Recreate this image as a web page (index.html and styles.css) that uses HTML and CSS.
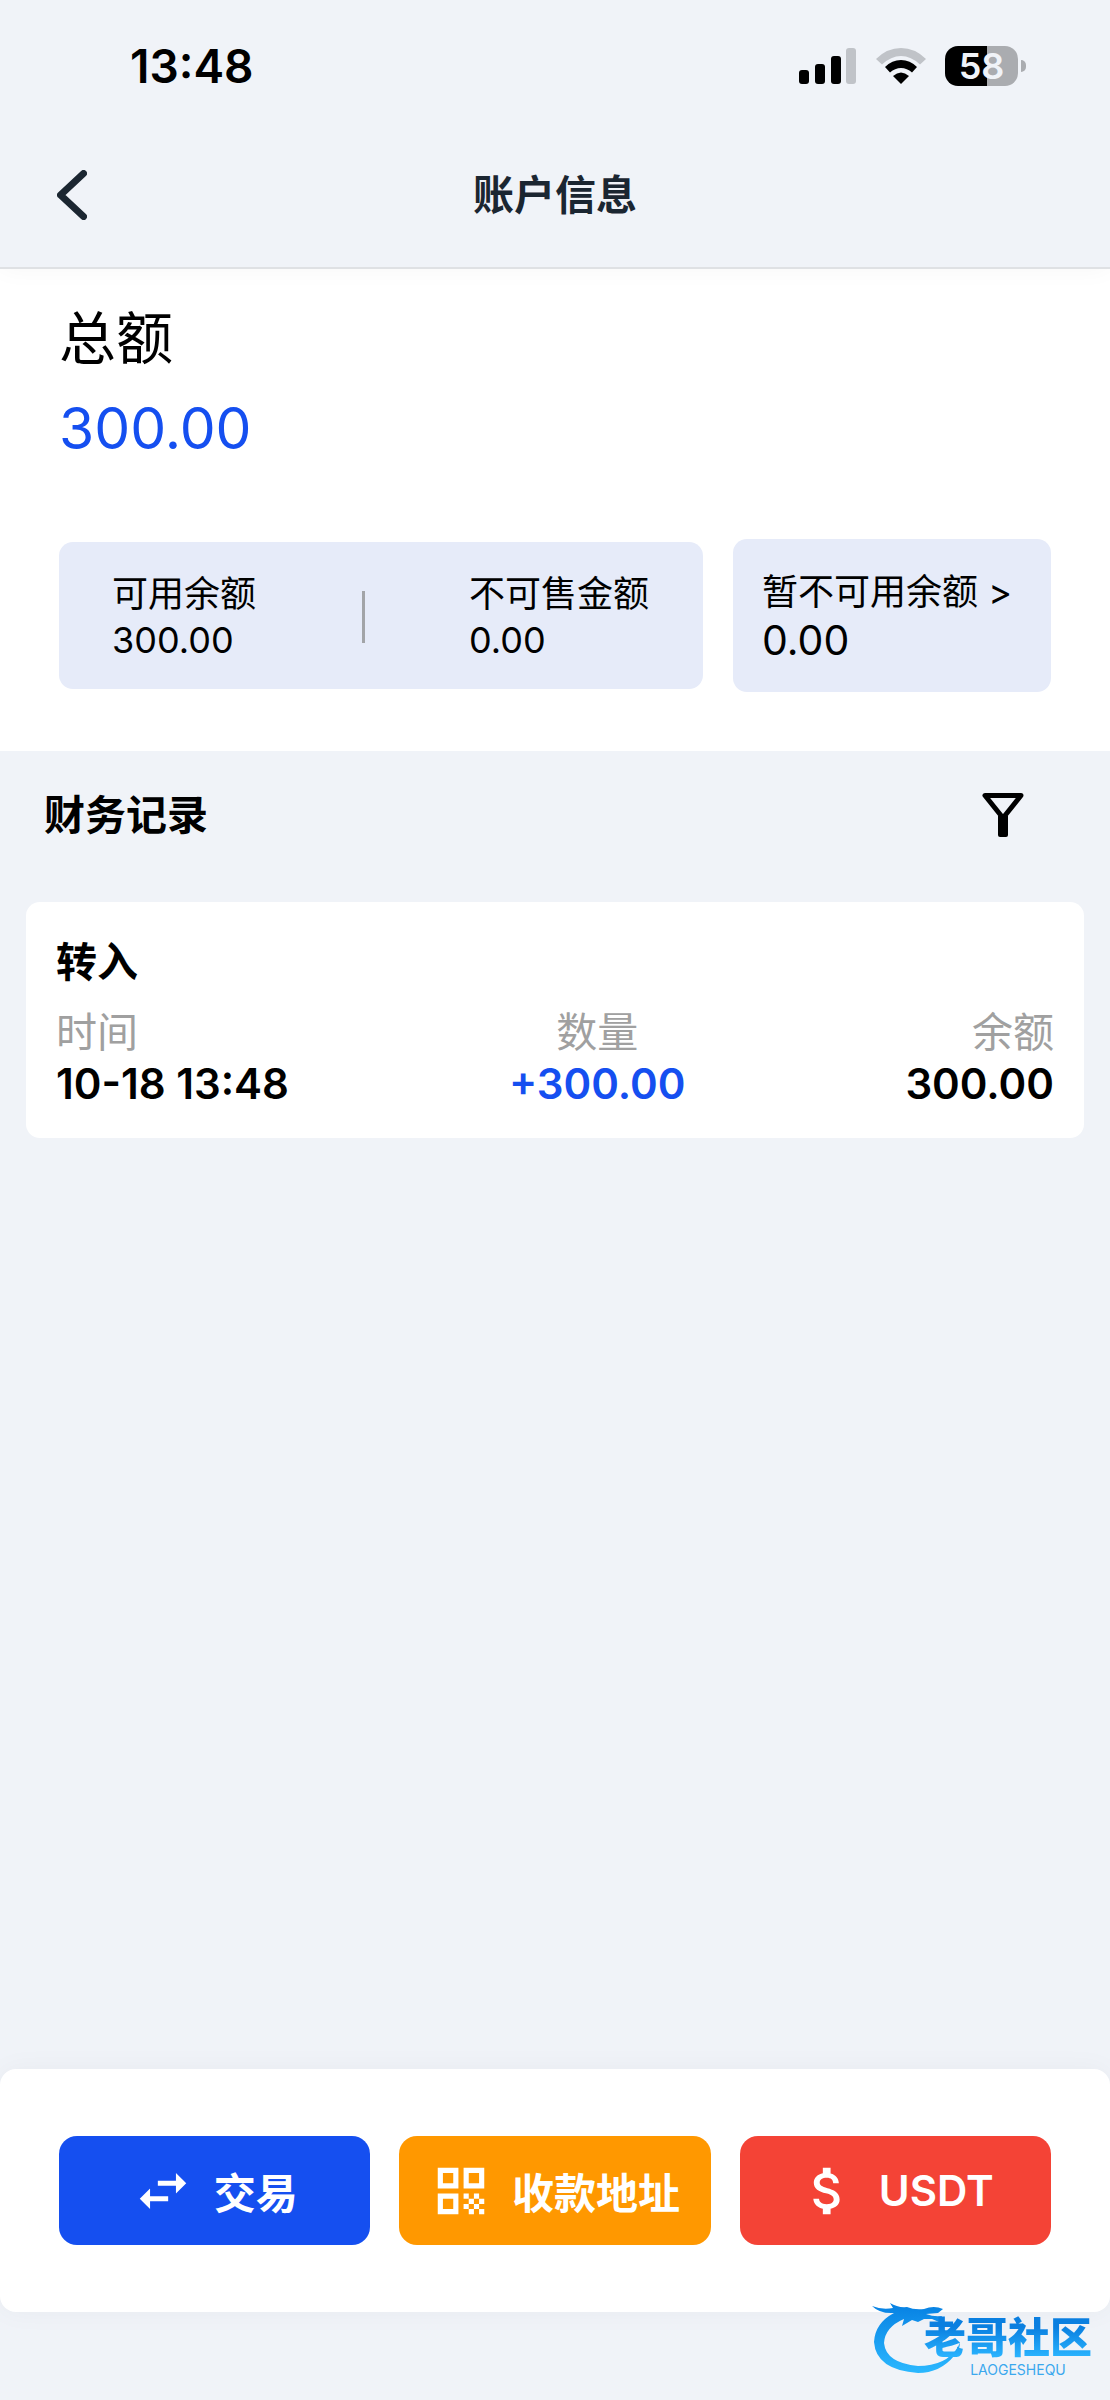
FILE: index.html
```html
<!DOCTYPE html>
<html lang="zh-CN">
<head>
<meta charset="utf-8">
<meta name="viewport" content="width=device-width, initial-scale=1">
<title>账户信息</title>
<link rel="stylesheet" href="styles.css">
</head>
<body>
<div class="app">
  <header class="top">
    <div class="status">
      <time class="clock">13:48</time>
      <div class="indicators">
        <svg class="signal" viewBox="0 0 58 36" aria-label="信号">
          <rect x="0" y="22" width="10" height="14" rx="3"/>
          <rect x="16" y="16" width="10" height="20" rx="3"/>
          <rect x="32" y="8" width="10" height="28" rx="3"/>
          <rect class="dim" x="47" y="0" width="10" height="36" rx="3"/>
        </svg>
        <svg class="wifi" viewBox="0 0 50 36" aria-label="无线网络">
          <path class="dim" d="M0 11Q11 0 25 0T50 11L44 16.500Q35 8 25 8T6 16.500Z"/>
          <path d="M9 19Q16 12 25 12T41 19L36 24.500Q31 20 25 20T14 24.500Z"/>
          <path d="M17 28Q21 24.500 25 24.500T33 28L25 36Z"/>
        </svg>
        <div class="battery"><span class="level">58</span></div>
      </div>
    </div>
    <nav class="nav">
      <button class="back" type="button" aria-label="返回">
        <svg viewBox="0 0 30 50"><path d="M26.500 3.500 3.500 25l23 21.500"/></svg>
      </button>
      <h1 class="title">账户信息</h1>
    </nav>
  </header>

  <section class="summary">
    <p class="total-label">总额</p>
    <p class="total">300.00</p>
    <div class="balances">
      <div class="panel split">
        <div class="balance"><span>可用余额</span><span>300.00</span></div>
        <div class="balance second"><span>不可售金额</span><span>0.00</span></div>
      </div>
      <a class="panel pending" href="#pending"><span>暂不可用余额 &gt;</span><span class="amount">0.00</span></a>
    </div>
  </section>

  <main class="records">
    <div class="records-head">
      <h2 class="heading">财务记录</h2>
      <button class="filter" type="button" aria-label="筛选">
        <svg viewBox="0 0 42 44"><path class="cone" d="M3 2.500h36L21 25Z"/><path class="stem" d="M16 23h10v19a2 2 0 0 1-2 2h-6a2 2 0 0 1-2-2Z"/></svg>
      </button>
    </div>
    <article class="card">
      <h3 class="heading">转入</h3>
      <dl class="fields">
        <div><dt>时间</dt><dd>10-18 13:48</dd></div>
        <div class="center"><dt>数量</dt><dd class="plus">+300.00</dd></div>
        <div class="end"><dt>余额</dt><dd>300.00</dd></div>
      </dl>
    </article>
  </main>

  <footer class="bottom">
    <div class="actions">
      <button class="action trade" type="button">
        <svg viewBox="0 0 24 24"><path d="M6.990 11 3 15l3.990 4v-3H14v-2H6.990zM21 9l-3.990-4v3H10v2h7.010v3z"/></svg>交易</button>
      <button class="action address" type="button">
        <svg viewBox="0 0 24 24"><path d="M3 3h8v8H3zm2 2v4h4V5zM13 3h8v8h-8zm2 2v4h4V5zM3 13h8v8H3zm2 2v4h4v-4zM13 13h2v2h-2zM17 13h2v2h-2zM15 15h2v2h-2zM19 15h2v2h-2zM13 17h2v2h-2zM17 17h2v2h-2zM15 19h2v2h-2zM19 19h2v2h-2z" fill-rule="evenodd"/></svg>收款地址</button>
      <button class="action usdt" type="button">
        <svg viewBox="0 0 24 24"><path d="M11.800 10.900c-2.270-.590-3-1.200-3-2.150 0-1.090 1.010-1.850 2.700-1.850 1.780 0 2.440.850 2.500 2.100h2.210c-.070-1.720-1.120-3.300-3.210-3.810V3h-3v2.160c-1.940.420-3.500 1.680-3.500 3.610 0 2.310 1.910 3.460 4.700 4.130 2.500.600 3 1.480 3 2.410 0 .690-.490 1.790-2.700 1.790-2.060 0-2.870-.920-2.980-2.100h-2.200c.120 2.190 1.760 3.420 3.680 3.830V21h3v-2.150c1.950-.370 3.500-1.500 3.500-3.550 0-2.840-2.430-3.810-4.700-4.400z"/></svg>USDT</button>
    </div>
  </footer>

  <div class="brand">
    <svg class="dragon" viewBox="0 0 92 80" aria-hidden="true">
      <defs><linearGradient id="sea" x1="0" y1="0" x2="0" y2="1"><stop offset="0" stop-color="#0680e2"/><stop offset="1" stop-color="#2bb8ff"/></linearGradient></defs>
      <path fill="url(#sea)" d="M0 6Q10 10 21 8L18 3Q26 8 35 7Q42 10 52 9Q62 5 71 9L66 13L54 14Q62 17 70 16L67 22L60 19L52 19L46 22L40 20L30 26L32 19Q13 27 12 43Q14 63 46 66Q74 66 86 47L88 42Q88 50 82 56Q68 73 46 73Q4 70 2 42Q3 23 22 13Q8 14 0 6Z"/>
    </svg>
    <div class="brand-text"><strong>老哥社区</strong><small>LAOGESHEQU</small></div>
  </div>
</div>
</body>
</html>
```
FILE: styles.css
```css
:root {
  --page: #f0f3f8;
  --blue: #154ff0;
  --panel: #e6ebf9;
  --ink: #1b2631;
}

* { box-sizing: border-box; }

body, h1, h2, h3, p, dl, dd { margin: 0; }

body {
  background: var(--page);
  color: #000;
  font-family: Inter, "Noto Sans CJK SC", sans-serif;
  font-size: 36px;
}

button {
  border: 0;
  padding: 0;
  background: none;
  color: inherit;
  font: inherit;
  cursor: pointer;
}

svg { display: block; }

.app {
  position: relative;
  display: flex;
  flex-direction: column;
  min-height: 100vh;
}

.top {
  position: relative;
  border-bottom: 2px solid #dfe1e4;
  box-shadow: 0 0 24px rgba(0, 0, 0, 0.04);
}

.status {
  display: flex;
  align-items: center;
  justify-content: space-between;
  height: 132px;
  padding: 0 84px 0 130px;
}

.clock { font-size: 46px; font-weight: 600; }

.indicators { display: flex; align-items: center; gap: 19px; }

.signal { width: 58px; height: 36px; }
.wifi { width: 50px; height: 36px; }
.dim { fill: #c0c3c8; }

.battery { display: flex; align-items: center; gap: 3px; }

.battery::after {
  content: "";
  width: 5px;
  height: 12px;
  border-radius: 0 6px 6px 0;
  background: #aaacb0;
}

.level {
  width: 73px;
  border-radius: 13px;
  background: linear-gradient(90deg, #000 58%, #aaacb0 58%);
  color: var(--page);
  font-size: 36px;
  font-weight: 600;
  line-height: 40px;
  text-align: center;
}

.nav {
  display: grid;
  grid-template-columns: 1fr auto 1fr;
  align-items: center;
  height: 135px;
  padding: 0 57px 10px;
}

.back svg {
  width: 30px;
  height: 50px;
  fill: none;
  stroke: var(--ink);
  stroke-width: 7;
  stroke-linecap: round;
  stroke-linejoin: round;
}

.title { color: var(--ink); font-size: 41px; font-weight: 700; line-height: 60px; }

.summary { padding: 28px 59px 59px; background: #fff; }

.total-label { font-size: 57px; line-height: 84px; }
.total { color: var(--blue); font-size: 57px; line-height: 96px; }

.balances {
  display: grid;
  grid-template-columns: 644fr 318fr;
  align-items: center;
  gap: 30px;
  margin-top: 62px;
}

.panel { border-radius: 14px; background: var(--panel); }

.split {
  display: grid;
  grid-template-columns: 303fr 341fr;
  align-items: center;
  height: 147px;
  padding-top: 2px;
}

.balance {
  display: flex;
  flex-direction: column;
  padding-left: 53px;
  line-height: 46px;
}

.second {
  padding-left: 107px;
  background: linear-gradient(#a2a4a8, #a2a4a8) left center / 3px 52px no-repeat;
}

.pending {
  display: flex;
  flex-direction: column;
  padding: 29px 29px 28px;
  color: inherit;
  line-height: 48px;
  text-decoration: none;
  white-space: nowrap;
}

.amount { font-size: 41px; }

.records { flex: 1; padding: 0 26px; }

.records-head {
  display: flex;
  align-items: center;
  justify-content: space-between;
  height: 151px;
  padding: 0 60px 24px 18px;
}

.heading { font-size: 41px; font-weight: 700; line-height: 60px; }

.filter svg { width: 42px; height: 44px; }
.cone { fill: none; stroke: #000; stroke-width: 5; stroke-linejoin: round; }

.card { padding: 30px 30px 28px; border-radius: 14px; background: #fff; }

.fields {
  display: flex;
  justify-content: space-between;
  margin-top: 14px;
  font-size: 41px;
  line-height: 52px;
}

.fields dt { color: #a0a0a0; }
.fields dd { font-size: 42px; font-weight: 600; }
.center { text-align: center; }
.end { text-align: right; }
.plus { color: var(--blue); }

.bottom {
  margin-bottom: 88px;
  padding: 67px 59px;
  border-radius: 16px;
  background: #fff;
  box-shadow: 0 0 28px rgba(0, 0, 0, 0.04);
}

.actions { display: grid; grid-template-columns: repeat(3, 1fr); gap: 29px; }

.action {
  display: flex;
  align-items: center;
  justify-content: center;
  gap: 20px;
  height: 109px;
  border-radius: 18px;
  color: #fff;
  font-size: 42px;
  font-weight: 600;
  white-space: nowrap;
}

.action svg { width: 62px; height: 62px; fill: currentColor; }

.trade { background: var(--blue); }
.address { background: #ff9800; }
.usdt { background: #f44336; }

.brand {
  position: absolute;
  right: 18px;
  bottom: 20px;
  width: 220px;
  height: 80px;
}

.dragon { width: 92px; height: 80px; }

.brand-text {
  position: absolute;
  top: 16px;
  right: 0;
  display: flex;
  flex-direction: column;
  align-items: center;
}

.brand-text strong {
  background: linear-gradient(#0a7fe0 25%, #2bb5ff 95%);
  background-clip: text;
  color: transparent;
  font-size: 42px;
  font-weight: 900;
  line-height: 44px;
}

.brand-text small { margin-left: 20px; color: #3ba8ee; font-size: 14px; line-height: 20px; }
```
